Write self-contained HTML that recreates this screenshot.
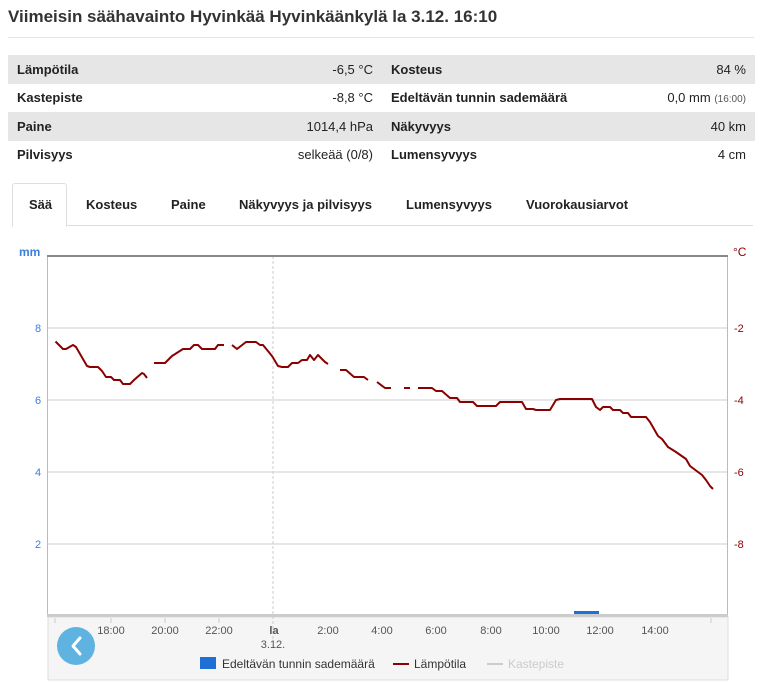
<!DOCTYPE html>
<html><head><meta charset="utf-8"><style>
body{margin:0;background:#fff;font-family:"Liberation Sans",Arial,sans-serif;color:#222;width:762px;height:688px;overflow:hidden;position:relative}
h1{position:absolute;left:8px;top:7px;margin:0;font-size:17px;font-weight:bold;color:#333}
.sep{position:absolute;left:8px;right:8px;top:37px;border-top:1px solid #e5e5e5}
table{position:absolute;left:8px;top:55px;width:747px;border-collapse:collapse;font-size:13px;table-layout:fixed}
td{height:28.5px;padding:0 9px;color:#222;white-space:nowrap}
tr:nth-child(odd) td{background:#e6e6e6}
td.l{font-weight:bold}
td.v{text-align:right}
.s{font-size:10px;color:#555}
.tabs{position:absolute;left:12px;top:183px;width:741px;height:42px;border-bottom:1px solid #ddd;font-size:13px;font-weight:bold}
.tab{position:absolute;top:14px}
.act{position:absolute;left:0;top:0;width:53px;height:42px;border:1px solid #ddd;border-bottom:1px solid #fff;border-radius:3px 3px 0 0;background:#fff}
</style></head><body>
<h1>Viimeisin säähavainto Hyvinkää Hyvinkäänkylä la 3.12. 16:10</h1>
<div class="sep"></div>
<table>
<colgroup><col style="width:180px"><col style="width:194px"><col style="width:210px"><col style="width:163px"></colgroup>
<tr><td class="l">Lämpötila</td><td class="v">-6,5 °C</td><td class="l">Kosteus</td><td class="v">84 %</td></tr>
<tr><td class="l">Kastepiste</td><td class="v">-8,8 °C</td><td class="l">Edeltävän tunnin sademäärä</td><td class="v">0,0 mm <span class="s">(16:00)</span></td></tr>
<tr><td class="l">Paine</td><td class="v">1014,4 hPa</td><td class="l">Näkyvyys</td><td class="v">40 km</td></tr>
<tr><td class="l">Pilvisyys</td><td class="v">selkeää (0/8)</td><td class="l">Lumensyvyys</td><td class="v">4 cm</td></tr>
</table>
<div class="tabs"><div class="act"></div>
<span class="tab" style="left:17px">Sää</span><span class="tab" style="left:74px">Kosteus</span><span class="tab" style="left:159px">Paine</span><span class="tab" style="left:227px">Näkyvyys ja pilvisyys</span><span class="tab" style="left:394px">Lumensyvyys</span><span class="tab" style="left:514px">Vuorokausiarvot</span></div>
<svg style="position:absolute;left:0;top:0" width="762" height="688" font-family="Liberation Sans, Arial, sans-serif">
<rect x="48" y="617" width="680" height="63" fill="#f5f5f5" stroke="#ddd"/>
<g stroke="#e6e6e6" stroke-width="2"><line x1="48" y1="328" x2="727" y2="328"/><line x1="48" y1="400" x2="727" y2="400"/><line x1="48" y1="472" x2="727" y2="472"/><line x1="48" y1="544" x2="727" y2="544"/></g>
<line x1="273" y1="256" x2="273" y2="640" stroke="#ccc" stroke-dasharray="3,2"/>
<line x1="47.5" y1="256" x2="47.5" y2="615" stroke="#bbb"/>
<line x1="727.5" y1="256" x2="727.5" y2="615" stroke="#bbb"/>
<line x1="47" y1="256" x2="728" y2="256" stroke="#888" stroke-width="2"/>
<line x1="47" y1="615.5" x2="728" y2="615.5" stroke="#ccc" stroke-width="3"/>
<rect x="574" y="611" width="25" height="3" fill="#1e6fd6"/>
<g stroke="#ccc"><line x1="55" y1="618" x2="55" y2="623"/><line x1="111" y1="618" x2="111" y2="623"/><line x1="165" y1="618" x2="165" y2="623"/><line x1="219" y1="618" x2="219" y2="623"/><line x1="711" y1="618" x2="711" y2="623"/></g>
<text x="19" y="256" font-size="12" fill="#3c7fd8" font-weight="bold">mm</text>
<text x="733" y="256" font-size="12" fill="#8b0000">°C</text>
<g font-size="11" fill="#3c7fd8"><text x="35" y="332">8</text><text x="35" y="404">6</text><text x="35" y="476">4</text><text x="35" y="548">2</text></g>
<g font-size="11" fill="#8b0000"><text x="734" y="332">-2</text><text x="734" y="404">-4</text><text x="734" y="476">-6</text><text x="734" y="548">-8</text></g>
<g font-size="11" fill="#555" text-anchor="middle"><text x="111" y="634">18:00</text><text x="165" y="634">20:00</text><text x="219" y="634">22:00</text><text x="274" y="634" font-weight="bold">la</text><text x="273" y="648">3.12.</text><text x="328" y="634">2:00</text><text x="382" y="634">4:00</text><text x="436" y="634">6:00</text><text x="491" y="634">8:00</text><text x="546" y="634">10:00</text><text x="600" y="634">12:00</text><text x="655" y="634">14:00</text></g>
<g fill="none" stroke="#8b0000" stroke-width="2" stroke-linejoin="round">
<polyline points="55.5,341.5 63,349 66,349 73,345 76,347 87,366 90,367 98,367 102,371 106,377 111,377 114,380 120,380 123,384 130,384 134,380 142,373 144,374 147,378"/>
<polyline points="154,363 165,363 172,356 183,349 190,349 194,345 198,345 202,349 215,349 218,345 224,345"/>
<polyline points="232,345 237,349 246,342 256,342 260,345 263,345 272,356 278,366 282,367 288,367 292,363 298,363 302,360 307,360 310,355 314,360 318,355 325,362 328,364"/>
<polyline points="340,370 346,370 354,377 364,377 368,380"/>
<polyline points="377,382 385,388 391,388"/>
<polyline points="404,388 410,388"/>
<polyline points="418,388 432,388 436,391 442,391 450,398 457,398 460,402 473,402 477,406 496,406 500,402 522,402 526,409 533,409 536,410 550,410 556,400 560,399 592,399 596,407 600,410 603,407 610,407 613,410 620,410 623,413 628,413 631,417 646,417 650,422 658,436 662,439 668,447 676,452 686,459 690,466 702,475 706,480 710,486 713,489"/>
</g>
<circle cx="76" cy="646" r="19" fill="#5fb3e0"/>
<polyline points="80,638 73,646 80,654" fill="none" stroke="#fff" stroke-width="3" stroke-linecap="round" stroke-linejoin="round"/>
<rect x="200" y="657" width="16" height="12" fill="#1e6fd6"/>
<text x="222" y="668" font-size="12" fill="#333">Edeltävän tunnin sademäärä</text>
<line x1="393" y1="664" x2="409" y2="664" stroke="#8b0000" stroke-width="2"/>
<text x="414" y="668" font-size="12" fill="#333">Lämpötila</text>
<line x1="487" y1="664" x2="503" y2="664" stroke="#ccc" stroke-width="2"/>
<text x="508" y="668" font-size="12" fill="#ccc">Kastepiste</text>
</svg>
</body></html>
